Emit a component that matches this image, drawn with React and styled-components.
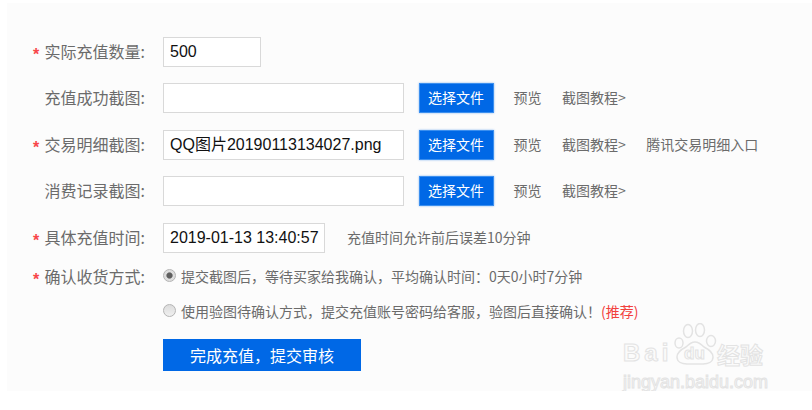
import React from "react";
import styled, { createGlobalStyle } from "styled-components";

const Global = createGlobalStyle`
  html, body { margin: 0; padding: 0; background: #fff; }
  body { width: 812px; height: 410px; overflow: hidden; font-family: "Noto Sans CJK SC", "Liberation Sans", sans-serif; }
`;

const Panel = styled.form`
  position: relative;
  box-sizing: border-box;
  margin: 3px 0 0 7px;
  height: 388px;
  padding: 34px 0 0 26px;
  background: #fcfcfc;
  display: flex;
  flex-direction: column;
  gap: 16.4px;
`;

const Row = styled.div`
  display: flex;
  align-items: center;
  height: 30px;
`;

const Star = styled.span`
  width: 11.5px;
  flex: none;
  padding-top: 5px;
  color: #f8474a;
  font: bold 16px/25px "Liberation Sans", sans-serif;
  visibility: ${(p) => (p.$hidden ? "hidden" : "visible")};
`;

const Label = styled.label`
  width: 118.5px;
  flex: none;
  margin-top: -2px;
  font-size: 16px;
  line-height: 30px;
  color: #6b6b6b;
  white-space: nowrap;
`;

const Field = styled.div`
  box-sizing: border-box;
  width: ${(p) => p.$w}px;
  height: 30px;
  flex: none;
  padding-left: 6px;
  background: #fff;
  border: 1px solid #d9d9d9;
  color: #111;
  font: 16px/28px "Liberation Sans", "Noto Sans CJK SC", sans-serif;
  white-space: nowrap;
`;

const FileButton = styled.button`
  box-sizing: border-box;
  width: 75px;
  height: 30px;
  flex: none;
  margin: 0 19.5px 0 15px;
  padding: 0 1px 2px 0;
  background: #0068e6;
  border: 1px solid #3b8fef;
  box-shadow: 0 0 2px rgba(0, 104, 230, 0.45);
  color: #fff;
  font: 14px/26px "Noto Sans CJK SC", sans-serif;
`;

const LinkText = styled.a`
  flex: none;
  margin: -2px 20.5px 0 0;
  color: #6b6b6b;
  font-size: 14px;
  line-height: 30px;
  white-space: nowrap;
`;

const Hint = styled.span`
  margin: -1px 0 0 22px;
  color: #6b6b6b;
  font-size: 14px;
  white-space: nowrap;
`;

const RadioBlock = styled.div`
  display: flex;
  flex-direction: column;
  margin-top: -7px;
  gap: 5px;
`;

const RadioRow = styled.div`
  display: flex;
  align-items: center;
  height: 30px;
`;

const RadioIndent = styled.div`
  width: 130px;
  flex: none;
`;

const Radio = styled.span`
  box-sizing: border-box;
  width: 13px;
  height: 13px;
  flex: none;
  margin: -2px 5px 0 0;
  border-radius: 50%;
  border: 1px solid #b4b4b4;
  background: ${(p) =>
    p.$on
      ? "radial-gradient(circle, #5f5f5f 0 2.6px, #dedede 3.6px)"
      : "linear-gradient(#dcdcdc, #f0f0f0)"};
`;

const RadioText = styled.span`
  margin-top: -2px;
  color: #6b6b6b;
  font-size: 14px;
  white-space: nowrap;
`;

const Recommend = styled.span`
  color: #f2403c;
`;

const SubmitRow = styled.div`
  margin: 0 0 0 130px;
`;

const Submit = styled.button`
  display: block;
  width: 198px;
  height: 32px;
  margin-top: -4px;
  padding: 0;
  border: 0;
  background: #0068e6;
  color: #fff;
  font: 16px/32px "Noto Sans CJK SC", sans-serif;
`;

const Watermark = styled.div`
  position: absolute;
  left: 614px;
  top: 318px;
  width: 170px;
  height: 70px;
  overflow: hidden;
  color: #fbfbfb;
  -webkit-text-stroke: 1px #e3e3e3;
`;

const Brand = styled.div`
  position: absolute;
  left: 2px;
  top: 17px;
  font: bold 24px/30px "Liberation Sans", sans-serif;
  letter-spacing: 4px;
`;

const BrandCn = styled.div`
  position: absolute;
  left: 96px;
  top: 18px;
  font: 700 23px/30px "Noto Sans CJK SC", sans-serif;
  white-space: nowrap;
`;

const Domain = styled.div`
  position: absolute;
  left: 2px;
  top: 51px;
  font: 18px/20px "Liberation Sans", sans-serif;
  white-space: nowrap;
`;

const PawMark = styled.div`
  position: absolute;
  left: 52px;
  top: 2px;
  width: 44px;
  height: 42px;
`;

const PawIcon = styled.svg`
  display: block;
`;

const PawLabel = styled.span`
  position: absolute;
  left: 11px;
  top: 22px;
  font: bold 17px/18px "Liberation Sans", sans-serif;
`;

function Paw() {
  return (
    <PawMark>
      <PawIcon width="44" height="42" viewBox="0 0 44 42" fill="none" stroke="#e3e3e3" strokeWidth="1.5">
        <ellipse cx="6" cy="20" rx="4" ry="5" />
        <ellipse cx="15" cy="8" rx="4.5" ry="6.5" />
        <ellipse cx="27" cy="7" rx="4.5" ry="6.5" />
        <ellipse cx="38" cy="18" rx="4.5" ry="5.5" />
        <path d="M22 19c-4 0-6 2-9 5-4 2-9 5-9 10 0 5 5 7 10 7h16c5 0 10-2 10-7 0-5-5-8-9-10-3-3-5-5-9-5z" />
      </PawIcon>
      <PawLabel>du</PawLabel>
    </PawMark>
  );
}

function UploadRow({ label, required, value, extra }) {
  return (
    <Row>
      <Star $hidden={!required}>*</Star>
      <Label>{label}</Label>
      <Field $w={241}>{value}</Field>
      <FileButton type="button">选择文件</FileButton>
      <LinkText>预览</LinkText>
      <LinkText>截图教程&gt;</LinkText>
      {extra && <LinkText>{extra}</LinkText>}
    </Row>
  );
}

export default function App() {
  return (
    <>
      <Global />
      <Panel>
        <Row>
          <Star>*</Star>
          <Label>实际充值数量:</Label>
          <Field $w={98}>500</Field>
        </Row>
        <UploadRow label="充值成功截图:" />
        <UploadRow label="交易明细截图:" required value="QQ图片20190113134027.png" extra="腾讯交易明细入口" />
        <UploadRow label="消费记录截图:" />
        <Row>
          <Star>*</Star>
          <Label>具体充值时间:</Label>
          <Field $w={162}>2019-01-13 13:40:57</Field>
          <Hint>充值时间允许前后误差10分钟</Hint>
        </Row>
        <RadioBlock>
          <Row>
            <Star>*</Star>
            <Label>确认收货方式:</Label>
            <Radio $on />
            <RadioText>提交截图后，等待买家给我确认，平均确认时间：0天0小时7分钟</RadioText>
          </Row>
          <RadioRow>
            <RadioIndent />
            <Radio />
            <RadioText>
              使用验图待确认方式，提交充值账号密码给客服，验图后直接确认！<Recommend>(推荐)</Recommend>
            </RadioText>
          </RadioRow>
        </RadioBlock>
        <SubmitRow>
          <Submit type="button">完成充值，提交审核</Submit>
        </SubmitRow>
        <Watermark>
          <Paw />
          <Brand>Bai</Brand>
          <BrandCn>经验</BrandCn>
          <Domain>jingyan.baidu.com</Domain>
        </Watermark>
      </Panel>
    </>
  );
}
